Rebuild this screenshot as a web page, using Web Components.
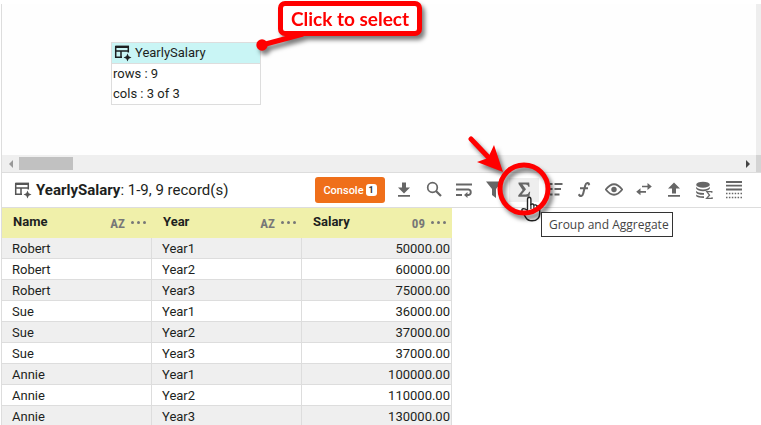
<!DOCTYPE html>
<html lang="en">
<head>
<meta charset="utf-8">
<title>YearlySalary</title>
<style>
  html, body { margin: 0; background: #fff; }
  body { font-family: Roboto, "Liberation Sans", sans-serif; font-size: 13px; color: #1d1f21; height: 100vh; overflow: hidden; position: relative; }
</style>
</head>
<body>
<data-workbench>
  <flow-canvas slot="canvas">
    <table-node name="YearlySalary" rows="9" cols="3 of 3"></table-node>
  </flow-canvas>
  <result-bar slot="bar" name="YearlySalary" range="1-9, 9 record(s)" count="1"></result-bar>
  <data-grid slot="grid"></data-grid>
</data-workbench>
<guide-layer></guide-layer>

<script>
const shadow = (el, html) => { el.attachShadow({ mode: 'open' }).innerHTML = html; };

const ICONS = {
  table: '<path d="M1.700 2.500h12.600v6M1.700 2.500v10.800H8M1.700 7h12.600M7 7v6.300" fill="none" stroke="currentColor" stroke-width="1.500"/><path d="M1 1.800h14v2.200H1z"/><path d="M13.500 9.500l1.200 2.800 2.800 1.200-2.800 1.200-1.200 2.800-1.200-2.800-2.800-1.200 2.800-1.200z"/>',
  download: '<path d="M7 1.500h4v5h4l-6 6-6-6h4zM3 14h12v1.800H3z"/>',
  search: '<circle cx="7.500" cy="6.500" r="4.800" fill="none" stroke="currentColor" stroke-width="1.700"/><path d="M11 10l5 5" stroke="currentColor" stroke-width="2.200"/>',
  wrap: '<path d="M1 3.500h16M1 8.500h12.500a2.800 2.800 0 0 1 0 5.500H11M1 14h6" fill="none" stroke="currentColor" stroke-width="1.900"/><path d="M12.500 11v6l-3.500-3z"/>',
  filter: '<path d="M1 .5h16l-6 7.500v9l-4-3V8z"/>',
  sigma: '<path d="M3.500 1.500h10.700l.4 4.300h-1.200q-.5-2.200-2.800-2.200H7.500L11 8.300l-4.300 5.200h4q2.600 0 3.500-2.800h1l-.8 5H3.300v-1.400L7.600 9 3.500 3z"/>',
  list: '<path d="M9.500 3h8M9.500 8h6.500M9.500 13.500h5" stroke="currentColor" stroke-width="1.900"/><path d="M5 3h2.500M5 8h2.500M5 13.500h2.500" stroke="currentColor" stroke-width="1.900"/>',
  fx: '<path d="M14.300 3.700C13.700 1.400 11 1.500 10.200 4.500L8.200 12.500c-.7 3-3.200 3.300-4.200 1.300M5 7.200h8" fill="none" stroke="currentColor" stroke-width="2"/><circle cx="13.700" cy="3.400" r="1"/><circle cx="4.300" cy="13.700" r="1"/>',
  eye: '<path d="M.8 8.500Q9-2 17.200 8.500 9 19 .8 8.500z" fill="none" stroke="currentColor" stroke-width="1.800"/><circle cx="9" cy="8.500" r="2.700"/>',
  swap: '<path d="M7 5.500h6.500M4.500 10.800H11" stroke="currentColor" stroke-width="1.700"/><path d="M12.500 2l4.300 3.500L12.500 9zM5.500 7.300l-4.300 3.500 4.300 3.500z"/>',
  upload: '<path d="M7 12.500h4v-5h4l-6-6-6 6h4zM3 14h12v1.800H3z"/>',
  database: '<ellipse cx="8" cy="3.700" rx="6.800" ry="3"/><path d="M1.200 5.800Q3 8.500 8 8.500t6.800-2.700v2Q13 10.200 8 10.200T1.200 7.800zM1.200 9.700Q3 12.100 9 11.900v1.900Q3 14.100 1.200 11.700zM1.200 13.500Q3 15.500 9 15.300v1.700Q3 17.100 1.200 15.300z"/><path d="M16.800 11.700V10.600h-5l2.700 3.600-2.900 3.200h5.500v-1.200" fill="none" stroke="currentColor" stroke-width="1.300"/>',
  rows: '<path d="M1 1h16M1 4.700h16M1 8.500h16" stroke="currentColor" stroke-width="1.800"/><path d="M1 12.500h16M1 16.500h16" stroke="currentColor" stroke-width="1.500" stroke-dasharray="1.500 1.400"/>'
};

customElements.define('ui-icon', class extends HTMLElement {
  connectedCallback() {
    shadow(this, `<style>:host{display:block;width:18px;height:18px}svg{display:block;width:100%;height:100%;fill:currentColor}</style>
      <svg viewBox="0 0 18 18" aria-hidden="true">${ICONS[this.getAttribute('name')]}</svg>`);
  }
});

customElements.define('data-workbench', class extends HTMLElement {
  connectedCallback() {
    shadow(this, `<style>
      :host{display:flex;flex-direction:column;min-height:100vh;padding:4px 0 0 1px;box-sizing:border-box}
      main{flex:1;display:flex;flex-direction:column;border-left:1px solid #ddd}
      </style><main><slot name="canvas"></slot><slot name="bar"></slot><slot name="grid"></slot></main>`);
  }
});

customElements.define('flow-canvas', class extends HTMLElement {
  connectedCallback() {
    shadow(this, `<style>
      :host{display:grid;grid-template-columns:1fr 5px;grid-template-rows:minmax(151px,auto) 17px;border-bottom:1px solid #ddd}
      .area{position:relative;background:#fefefe}
      .v{background:#eee}
      .h{display:flex;align-items:center;justify-content:space-between;background:#efefef;padding:0 5px 0 6px}
      .left{display:flex;align-items:center;gap:6px}
      .thumb{width:54px;height:13px;background:#c1c1c1}
      .corner{background:#d4d4d4}
      svg{display:block;width:5px;height:8px}
      </style>
      <div class="area"><slot></slot></div><div class="v"></div>
      <div class="h"><div class="left"><svg viewBox="0 0 5 8"><path d="M5 0v8L1 4z" fill="#999"/></svg><div class="thumb"></div></div>
      <svg viewBox="0 0 5 8"><path d="M0 0v8l4-4z" fill="#444"/></svg></div><div class="corner"></div>`);
  }
});

customElements.define('table-node', class extends HTMLElement {
  connectedCallback() {
    const a = n => this.getAttribute(n);
    shadow(this, `<style>
      :host{display:block;position:absolute;left:109px;top:38px;width:150px;box-sizing:border-box;border:1px solid #ddd;background:#fff;line-height:20px}
      header{display:flex;align-items:center;gap:3px;height:20px;padding-left:2px;background:#c9f5f5;border-bottom:1px solid #ddd}
      p{margin:0;padding-left:1px}
      </style><header><ui-icon name="table"></ui-icon><span>${a('name')}</span></header>
      <p>rows : ${a('rows')}</p><p>cols : ${a('cols')}</p>`);
  }
});

customElements.define('tool-button', class extends HTMLElement {
  connectedCallback() {
    shadow(this, `<style>
      :host{display:block}
      button{display:flex;align-items:center;justify-content:center;width:30px;height:24px;border:0;padding:0;background:none;color:#666}
      :host([active]) button{background:#eee}
      </style><button type="button" aria-label="${this.getAttribute('label')}"><ui-icon name="${this.getAttribute('icon')}"></ui-icon></button>`);
  }
});

customElements.define('result-bar', class extends HTMLElement {
  connectedCallback() {
    const a = n => this.getAttribute(n);
    const tools = [['download','Download'],['search','Search'],['wrap','Wrap text'],['filter','Filter'],['sigma','Group and Aggregate'],['list','Sort'],['fx','Formula'],['eye','Columns'],['swap','Swap'],['upload','Upload'],['database','Aggregate data'],['rows','Row range']];
    shadow(this, `<style>
      :host{display:flex;align-items:center;height:34px;border-bottom:1px solid #ddd;padding:0 12px;gap:4px}
      .title{flex:1;display:flex;align-items:center;gap:4px;font-size:15px;white-space:nowrap}
      .title ui-icon{color:#555}
      .console{display:flex;align-items:center;justify-content:center;gap:2px;width:70px;height:26px;border:0;border-radius:3px;background:#ef6f1a;color:#fff;font:500 11px Roboto,sans-serif;padding:0}
      .console b{width:11px;line-height:12px;border-radius:3px;background:#fff;color:#333;font-size:9px}
      .tools{display:flex}
      </style>
      <div class="title"><ui-icon name="table"></ui-icon><span><b>${a('name')}</b>: ${a('range')}</span></div>
      <button class="console" type="button">Console <b>${a('count')}</b></button>
      <div class="tools">${tools.map(([i, l]) => `<tool-button icon="${i}" label="${l}"${i === 'sigma' ? ' active' : ''}></tool-button>`).join('')}</div>`);
  }
});

customElements.define('data-grid', class extends HTMLElement {
  connectedCallback() {
    const cols = [['Name', 'AZ'], ['Year', 'AZ'], ['Salary', '09']];
    const data = { Robert: [50000, 60000, 75000], Sue: [36000, 37000, 37000], Annie: [100000, 110000, 130000] };
    const rows = Object.entries(data).flatMap(([n, v]) => v.map((s, i) => `<tr><td>${n}</td><td>Year${i + 1}</td><td>${s.toFixed(2)}</td></tr>`)).join('');
    shadow(this, `<style>
      :host{display:block}
      table{border-spacing:0;table-layout:fixed;width:450px}
      th{background:#f0f0aa;height:30px;padding:0 4px 0 11px;text-align:left}
      th>div{display:flex;align-items:center;height:30px}
      .name{flex:1;padding-bottom:4px}
      button{border:0;background:none;padding:0;color:#777;font:bold 13px "Liberation Sans Narrow","Roboto Condensed",Roboto,sans-serif}
      .more{display:flex;gap:3px;padding:2px 2px 4px 6px}
      i{width:3px;height:3px;border-radius:50%;background:#777}
      td{height:19px;line-height:19px;padding:1px 0 0 10px;border-right:1px solid #ddd;border-bottom:1px solid #ddd}
      td:last-child{text-align:right;padding:1px 1px 0 0}
      tr:nth-child(odd) td{background:#efefef}
      </style>
      <table><thead><tr>${cols.map(([n, t]) => `<th scope="col"><div><span class="name">${n}</span><button type="button">${t}</button><button class="more" type="button" aria-label="${n} options"><i></i><i></i><i></i></button></div></th>`).join('')}</tr></thead><tbody>${rows}</tbody></table>`);
  }
});

customElements.define('guide-layer', class extends HTMLElement {
  connectedCallback() {
    shadow(this, `<style>
      :host{position:absolute;inset:0;pointer-events:none}
      svg{position:absolute;left:0;top:0;width:761px;height:425px}
      .shade{filter:drop-shadow(3px 4px 2px rgba(0,0,0,.5))}
      .call{position:absolute;left:278px;top:1px;border:5px solid #f00;border-radius:7px;background:#fff;color:#f00;box-sizing:border-box;width:144px;height:35px;text-align:center;line-height:25px;font-family:Lato,sans-serif;font-weight:bold;font-size:19px;white-space:nowrap}
      .tip{position:absolute;left:541px;top:212px;border:1px solid #333;background:#fff;color:#444;padding:0 3px 0 7px;line-height:23px;font-family:"Open Sans",sans-serif;font-size:12px;white-space:nowrap}
      </style>
      <div class="shade"><svg viewBox="0 0 761 425"><path d="M262 45L303 34" stroke="#f00" stroke-width="5"/><circle cx="262" cy="45" r="5.700" fill="#f00"/></svg>
      <div class="call">Click to select</div></div>
      <svg viewBox="0 0 761 425">
        <path d="M527.500 210.500V199.500q0-2.300 1.700-2.300t1.700 2.300v5q2.200-1.300 3 .7 2.100-.9 2.800.8 3-.6 3 2.300v5q0 7.500-7.700 7.500-4.200 0-6.300-3.500l-3.600-6q-.8-2.600 1.400-2.700 2 0 4 1.900z" fill="#fff" stroke="#222" stroke-width="1.400"/>
        <path d="M530.900 204v5M533.900 205.500v4.500M536.700 206.500v4" stroke="#222" stroke-width="1.200"/>
        <g class="shade"><circle cx="524" cy="189" r="24" fill="none" stroke="#f00" stroke-width="5"/>
        <path d="M471 139l20 21" stroke="#f00" stroke-width="5" stroke-linecap="round"/><path d="M503 172l-26-10 11-4 6-13z" fill="#f00"/></g>
      </svg>
      <div class="tip" role="tooltip">Group and Aggregate</div>`);
  }
});
</script>
</body>
</html>
